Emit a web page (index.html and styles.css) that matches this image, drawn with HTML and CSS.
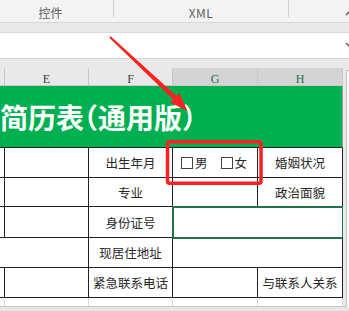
FILE: index.html
```html
<!DOCTYPE html>
<html lang="zh-CN">
<head>
    <meta charset="UTF-8">
    <meta name="viewport" content="width=device-width, initial-scale=1.0">
    <title>简历表（通用版）</title>
    <link rel="stylesheet" href="styles.css">
</head>
<body>
    <div class="window">
        <div class="ribbon">
            <div class="group group-ctrl">控件</div>
            <div class="group group-xml">XML</div>
            <div class="group-rest">
                <svg class="collapse" width="8" height="6" viewBox="0 0 8 6"><polyline points="1,5 4,2 7,5" fill="none" stroke="#555" stroke-width="1.3"/></svg>
            </div>
        </div>
        <div class="band"></div>
        <div class="formula">
            <svg class="drop" width="8" height="6" viewBox="0 0 8 6"><polyline points="1,1 4,4 7,1" fill="none" stroke="#555" stroke-width="1.3"/></svg>
        </div>
        <div class="band band-low"></div>

        <div class="sheet-wrap">
            <div class="sheet">
                <!-- column headers -->
                <div class="hd"></div>
                <div class="hd">E</div>
                <div class="hd">F</div>
                <div class="hd sel">G</div>
                <div class="hd sel">H</div>

                <div class="title"><span>简历表（通用版）</span></div>

                <div class="c"></div>
                <div class="c"></div>
                <div class="c">出生年月</div>
                <div class="c">
                    <div class="gender">
                        <span class="opt"><span class="cb"></span>男</span>
                        <span class="opt"><span class="cb"></span>女</span>
                    </div>
                </div>
                <div class="c">婚姻状况</div>

                <div class="c"></div>
                <div class="c"></div>
                <div class="c">专业</div>
                <div class="c"></div>
                <div class="c">政治面貌</div>

                <div class="c"></div>
                <div class="c"></div>
                <div class="c">身份证号</div>
                <div class="c span2 pick"></div>

                <div class="c span2"></div>
                <div class="c">现居住地址</div>
                <div class="c span2"></div>

                <div class="c"></div>
                <div class="c"></div>
                <div class="c">紧急联系电话</div>
                <div class="c"></div>
                <div class="c">与联系人关系</div>

                <div class="g"></div>
                <div class="g"></div>
                <div class="g"></div>
                <div class="g"></div>
                <div class="g"></div>
            </div>
            <div class="vscroll"><div class="track"></div></div>
        </div>
        <div class="hscroll"></div>

        <svg class="marks" width="349" height="311" viewBox="0 0 349 311">
            <polygon points="110.7,36.3 176.6,95.9 179.4,93 187.5,111 170.4,102.4 173.2,99.5 109.3,37.7" fill="#ff2020"/>
            <rect x="167.5" y="141.8" width="93.5" height="41.5" rx="2" fill="none" stroke="#ff2020" stroke-width="3.5"/>
        </svg>
    </div>
</body>
</html>
```

FILE: styles.css
```css
body {
    margin: 0;
    font-family: "Noto Sans CJK SC", "Noto Sans", sans-serif;
    background-color: #fff;
}
.window {
    position: relative;
    width: 349px;
    height: 311px;
    overflow: hidden;
}
.ribbon {
    display: flex;
    height: 22px;
    background-color: #f3f3f3;
    color: #5f5f5f;
    font-size: 12px;
}
.group {
    height: 17px;
    box-sizing: border-box;
    padding-top: 5px;
    line-height: 16px;
    text-align: center;
    border-right: 1px solid #d2d2d2;
}
.group-ctrl {
    width: 114px;
    padding-right: 12px;
}
.group-xml {
    width: 175px;
    letter-spacing: 0.5px;
}
.group-rest {
    flex: 1;
    display: flex;
    justify-content: flex-end;
    padding-top: 10px;
}
.collapse {
    margin-right: -4px;
}
.band {
    height: 11px;
    box-sizing: border-box;
    background-color: #e9e9e9;
    border-top: 1px solid #d8d8d8;
    border-bottom: 1px solid #d8d8d8;
}
.band-low {
    height: 9px;
    border: none;
}
.formula {
    display: flex;
    justify-content: flex-end;
    align-items: center;
    height: 26px;
    box-sizing: border-box;
    background-color: #fff;
    border-bottom: 1px solid #d6d6d6;
}
.drop {
    margin-right: -4px;
    margin-top: -2px;
}
.sheet-wrap {
    display: flex;
    height: 238px;
}
.sheet {
    display: grid;
    grid-template-columns: 5px 84px 84px 85px 85px;
    grid-template-rows: 18px 62px 30px 29px 31px 30px 30px 8px;
    width: 343px;
}
.sheet > div {
    box-sizing: border-box;
}
.hd {
    background-color: #e9e9e9;
    border-right: 1px solid #c8c8c8;
    border-bottom: 1px solid #c8c8c8;
    font-family: "Liberation Serif", serif;
    font-size: 12px;
    line-height: 14px;
    padding-top: 4px;
    text-align: center;
    color: #3c3c3c;
}
.hd.sel {
    background-color: #d4d4d4;
    color: #217346;
}
.title {
    grid-column: 1 / 6;
    display: flex;
    align-items: center;
    background-color: #00b050;
    border-right: 1px solid #9a9a9a;
    border-bottom: 1px solid #222;
    color: #fff;
    font-size: 28px;
    font-weight: 700;
    white-space: nowrap;
    font-feature-settings: "halt";
}
.c {
    display: flex;
    align-items: center;
    justify-content: center;
    border-right: 1px solid #222;
    border-bottom: 1px solid #222;
    font-size: 12.5px;
    color: #262626;
    white-space: nowrap;
}
.c.span2 {
    grid-column: span 2;
}
.c.pick {
    outline: 2px solid #217346;
    outline-offset: -1px;
}
.gender {
    display: flex;
    align-items: center;
    gap: 13px;
    margin-left: -2px;
}
.opt {
    display: flex;
    align-items: center;
    gap: 2px;
}
.cb {
    width: 12px;
    height: 12px;
    box-sizing: border-box;
    border: 1px solid #444;
}
.g {
    border-right: 1px solid #dadada;
}
.vscroll {
    flex: 1;
    background-color: #e9e9e9;
    padding: 2px 0 0 3px;
}
.track {
    height: 100%;
    background-color: #fff;
    border-left: 1px solid #c6c6c6;
    border-top: 1px solid #c6c6c6;
}
.hscroll {
    height: 5px;
    box-sizing: border-box;
    background-color: #e6e6e6;
    border-top: 1px solid #c6c6c6;
}
.marks {
    position: absolute;
    top: 0;
    left: 0;
    pointer-events: none;
}
```
